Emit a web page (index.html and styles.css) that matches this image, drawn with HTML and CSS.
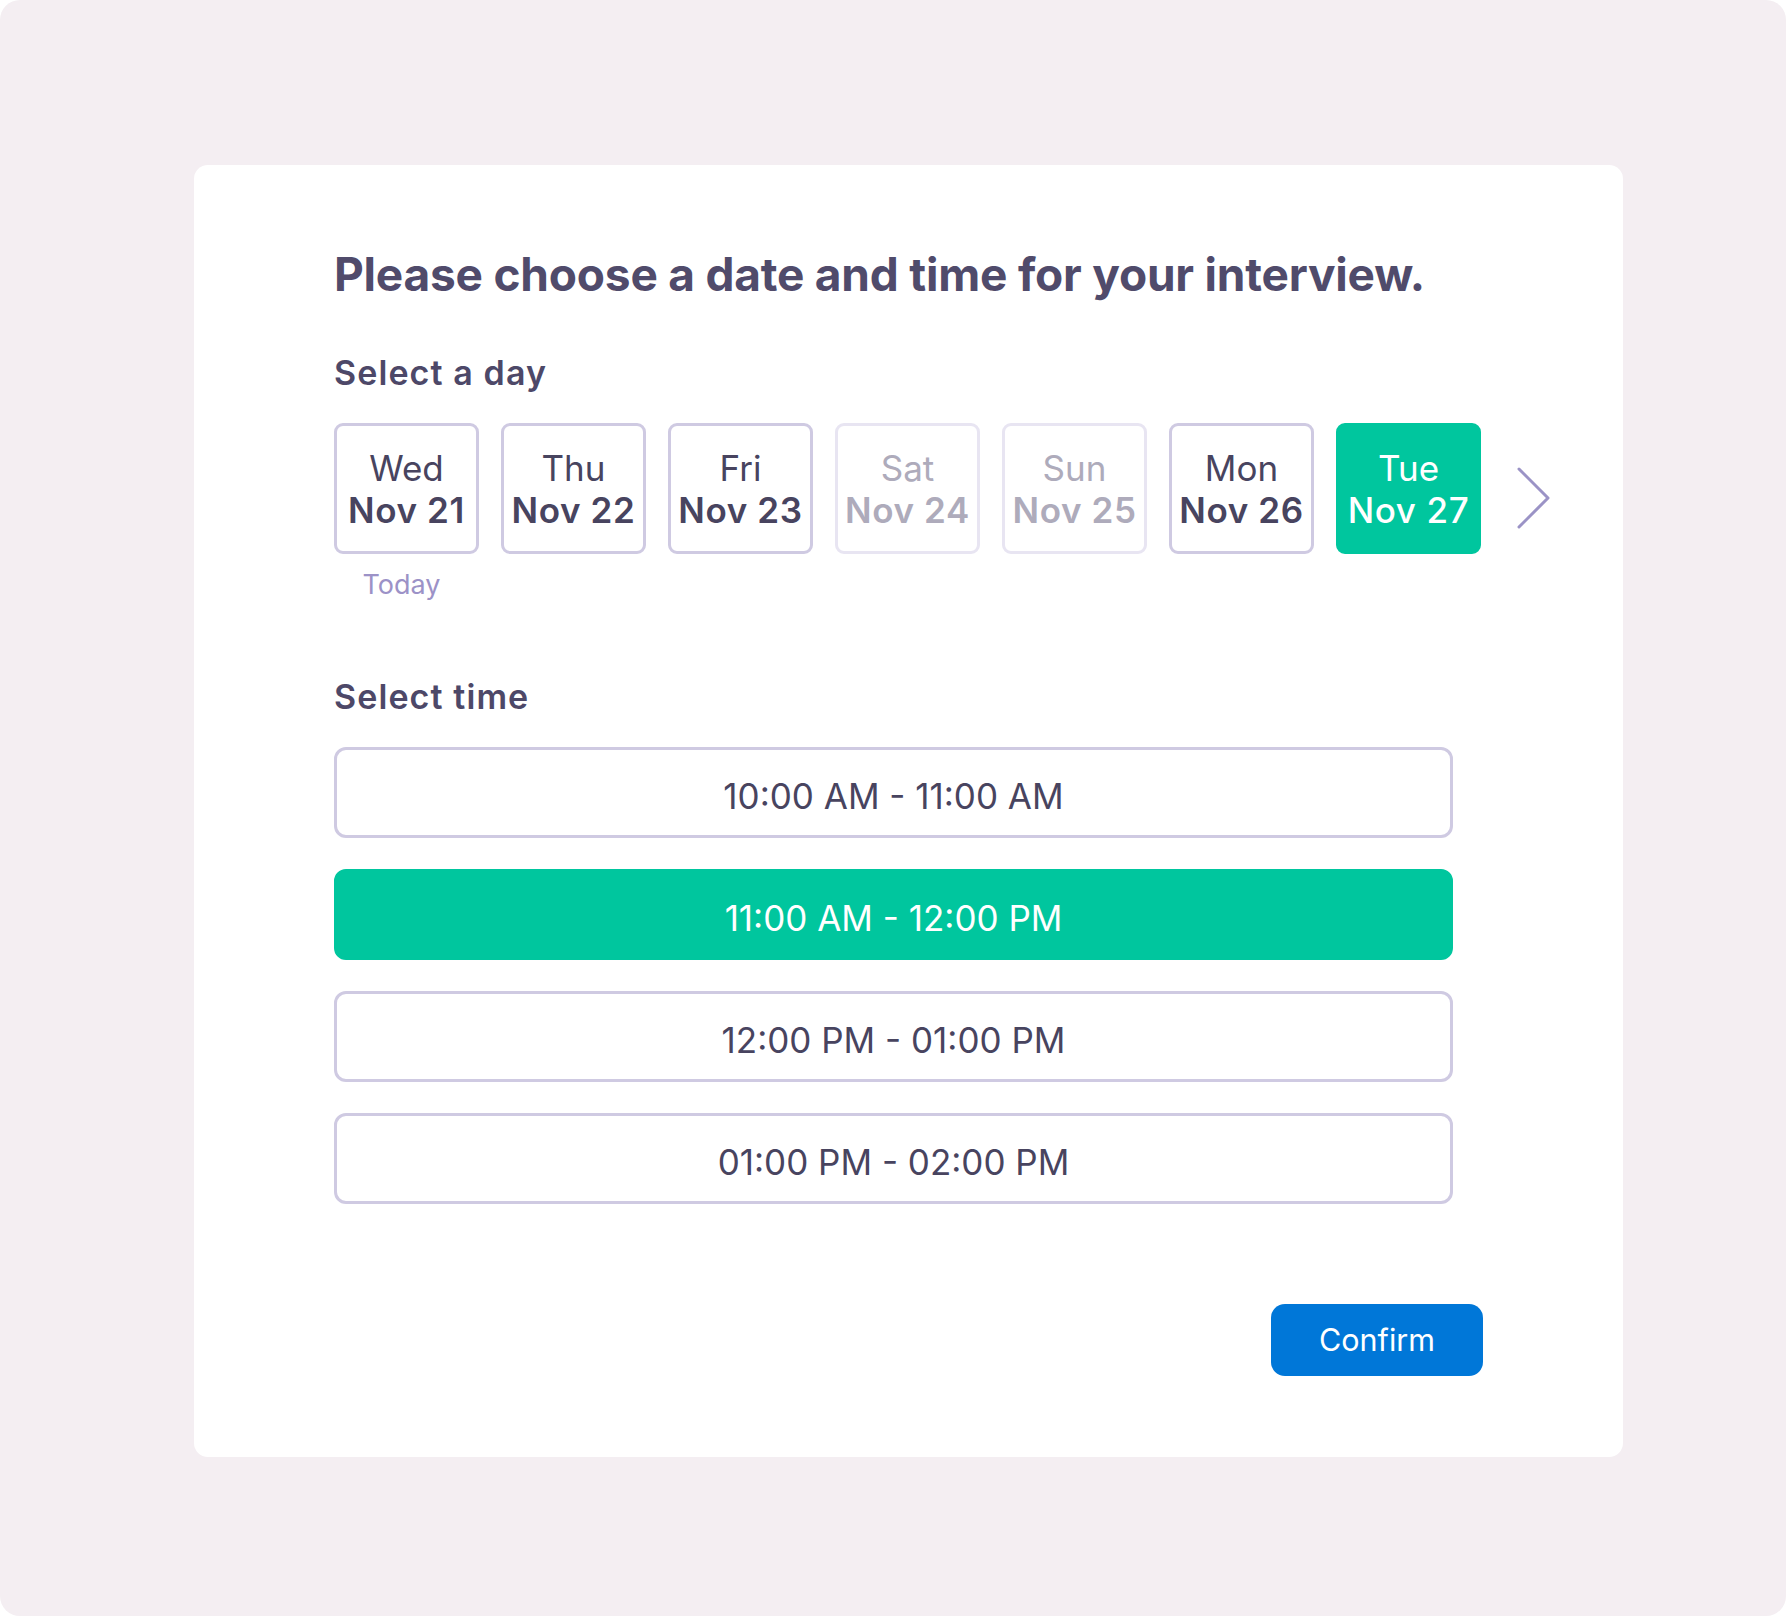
FILE: index.html
```html
<!DOCTYPE html>
<html lang="en">
<head>
<meta charset="utf-8">
<title>Schedule interview</title>
<link rel="stylesheet" href="styles.css">
</head>
<body>
<div class="frame">
  <main class="card">
    <h1 class="title">Please choose a date and time for your interview.</h1>

    <h2 class="section-label label-day">Select a day</h2>
    <div class="days">
      <div class="day-item">
        <button class="day">
          <span class="day-name">Wed</span>
          <span class="day-date">Nov 21</span>
        </button>
        <span class="today">Today</span>
      </div>
      <div class="day-item">
        <button class="day">
          <span class="day-name">Thu</span>
          <span class="day-date">Nov 22</span>
        </button>
      </div>
      <div class="day-item">
        <button class="day">
          <span class="day-name">Fri</span>
          <span class="day-date">Nov 23</span>
        </button>
      </div>
      <div class="day-item">
        <button class="day day-disabled">
          <span class="day-name">Sat</span>
          <span class="day-date">Nov 24</span>
        </button>
      </div>
      <div class="day-item">
        <button class="day day-disabled">
          <span class="day-name">Sun</span>
          <span class="day-date">Nov 25</span>
        </button>
      </div>
      <div class="day-item">
        <button class="day">
          <span class="day-name">Mon</span>
          <span class="day-date">Nov 26</span>
        </button>
      </div>
      <div class="day-item">
        <button class="day day-selected">
          <span class="day-name">Tue</span>
          <span class="day-date">Nov 27</span>
        </button>
      </div>
      <button class="next" aria-label="Next days">
        <svg width="34" height="62" viewBox="0 0 34 62">
          <polyline points="2,2 31,31 2,60" fill="none" stroke="#9b93c6" stroke-width="3" stroke-linecap="round" stroke-linejoin="round"/>
        </svg>
      </button>
    </div>

    <h2 class="section-label label-time">Select time</h2>
    <div class="slots">
      <button class="slot">10:00 AM - 11:00 AM</button>
      <button class="slot slot-selected">11:00 AM - 12:00 PM</button>
      <button class="slot">12:00 PM - 01:00 PM</button>
      <button class="slot">01:00 PM - 02:00 PM</button>
    </div>

    <div class="actions">
      <button class="confirm">Confirm</button>
    </div>
  </main>
</div>
</body>
</html>
```

FILE: styles.css
```css
* {
  box-sizing: border-box;
}

html {
  background: #ffffff;
}

body {
  margin: 0;
  font-family: "Inter", "Noto Sans", "Liberation Sans", sans-serif;
  color: #4a4662;
}

button {
  font-family: inherit;
  cursor: pointer;
  padding: 0;
  margin: 0;
}

.frame {
  width: 1786px;
  height: 1616px;
  background: #f4eef2;
  border-radius: 20px;
  padding: 165px 0 0 194px;
}

.card {
  width: 1429px;
  height: 1292px;
  background: #ffffff;
  border-radius: 14px;
  padding: 81px 140px 0 140px;
  display: flex;
  flex-direction: column;
}

.title {
  margin: 0;
  font-size: 46px;
  line-height: 56px;
  font-weight: 700;
  color: #504b6b;
  letter-spacing: -0.2px;
  white-space: nowrap;
}

.section-label {
  margin: 0;
  font-size: 34px;
  line-height: 40px;
  font-weight: 600;
  letter-spacing: 1.1px;
  color: #4d4868;
}

.label-day {
  margin-top: 51px;
}

.label-time {
  margin-top: 76px;
}

.days {
  margin-top: 30px;
  display: flex;
  align-items: flex-start;
  gap: 22px;
}

.day-item {
  display: flex;
  flex-direction: column;
  align-items: center;
  width: 145px;
}

.day {
  width: 145px;
  height: 131px;
  border: 3px solid #cfcae2;
  border-radius: 9px;
  background: #ffffff;
  display: flex;
  flex-direction: column;
  align-items: center;
  justify-content: center;
  color: #48445f;
}

.day-name {
  font-size: 35px;
  line-height: 42px;
  font-weight: 400;
}

.day-date {
  font-size: 35px;
  line-height: 42px;
  font-weight: 600;
  letter-spacing: 0.6px;
}

.day-disabled {
  border-color: #e8e5f2;
  color: #aeabbb;
}

.day-selected {
  border-color: #00c69e;
  background: #00c69e;
  color: #ffffff;
}

.day-selected .day-date {
  font-weight: 500;
}

.today {
  margin-top: 15px;
  margin-right: 10px;
  font-size: 27px;
  line-height: 32px;
  color: #9c92c7;
}

.next {
  margin-left: 14px;
  margin-top: 44px;
  width: 34px;
  height: 62px;
  border: none;
  background: transparent;
  display: block;
}

.next svg {
  display: block;
}

.slots {
  margin-top: 30px;
  display: flex;
  flex-direction: column;
  gap: 31px;
  width: 1119px;
}

.slot {
  height: 91px;
  border: 3px solid #cfcae2;
  border-radius: 12px;
  background: #ffffff;
  display: flex;
  align-items: center;
  justify-content: center;
  padding-top: 6px;
  font-size: 35px;
  line-height: 42px;
  font-weight: 400;
  color: #48445f;
}

.slot-selected {
  border-color: #00c69e;
  background: #00c69e;
  color: #ffffff;
}

.actions {
  margin-top: 100px;
  display: flex;
  justify-content: flex-end;
}

.confirm {
  width: 212px;
  height: 72px;
  border: none;
  border-radius: 14px;
  background: #0077d8;
  color: #ffffff;
  font-size: 30.5px;
  font-weight: 400;
  line-height: 40px;
}
```
